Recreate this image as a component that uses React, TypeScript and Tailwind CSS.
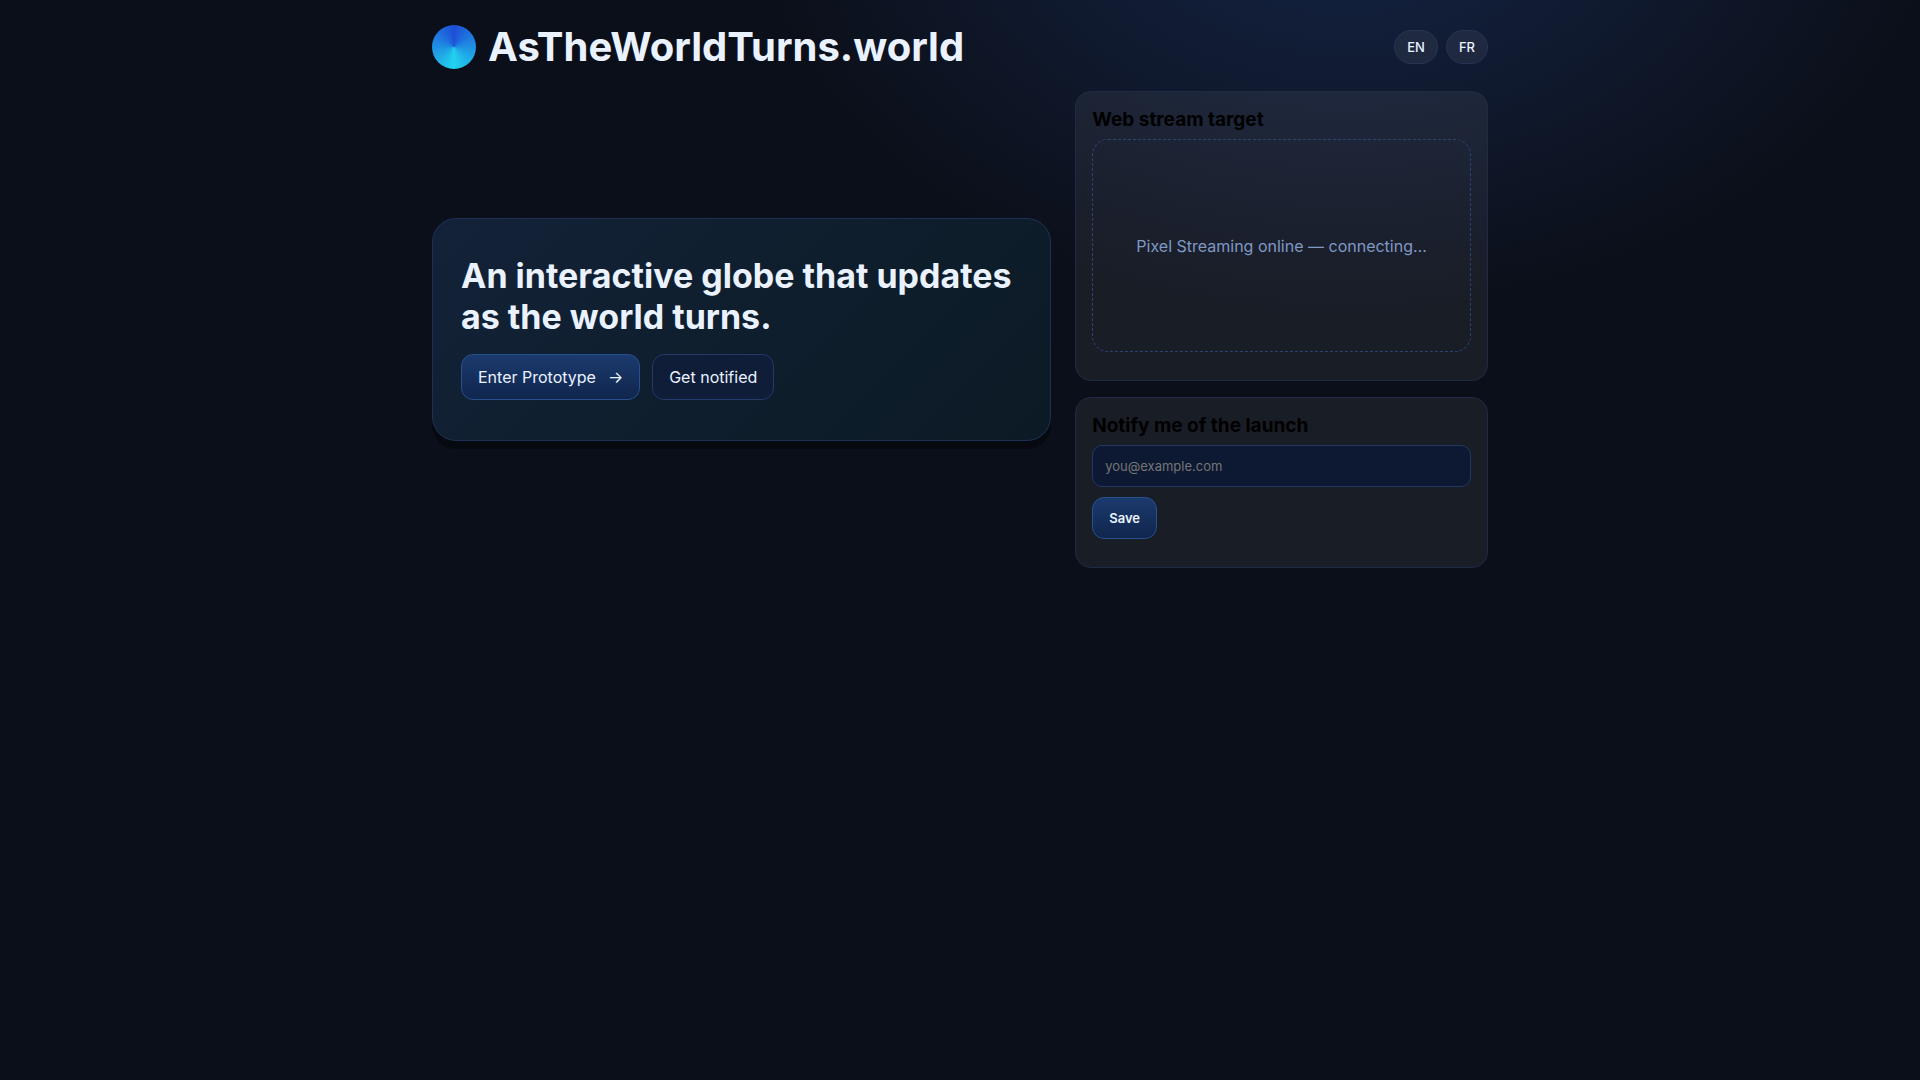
import { ReactNode } from "react";

function Card({ title, children }: { title: string; children: ReactNode }) {
  return (
    <section className="rounded-2xl border border-[#1f2a44] bg-white/[0.06] px-4 pt-4 pb-7">
      <h3 className="mb-2 text-[19px] leading-[23px] font-bold text-black">{title}</h3>
      {children}
    </section>
  );
}

export default function App() {
  return (
    <div className="min-h-screen bg-[#0b0f19] bg-[radial-gradient(1000px_700px_at_70%_-10%,#152546_0%,transparent_60%)] font-['Inter',sans-serif] text-base text-[#eaf2ff]">
      <div className="mx-auto max-w-[1100px] px-[22px] pb-6">
        {/* Header */}
        <header className="flex items-center justify-between pt-6 pb-[21px]">
          <div className="flex items-center gap-3">
            <div className="size-11 rounded-full bg-[conic-gradient(#1d4ed8,#22d3ee,#1d4ed8)]" />
            <h1 className="text-[40px] leading-[46px] font-bold">AsTheWorldTurns.world</h1>
          </div>
          <nav className="flex gap-2">
            <button className="rounded-full border border-[#273352] bg-white/[0.06] px-3 py-2 text-[13px] leading-4 font-medium">
              EN
            </button>
            <button className="rounded-full border border-[#273352] bg-white/[0.06] px-3 py-2 text-[13px] leading-4 font-medium">
              FR
            </button>
          </nav>
        </header>

        <main className="grid grid-cols-1 items-center gap-6 lg:grid-cols-[3fr_2fr]">
          {/* Hero */}
          <section className="rounded-3xl border border-[#1f3055] bg-[linear-gradient(135deg,#132238,#0e1e2c_55%,#0c1a25)] px-7 pt-9 pb-10 shadow-[0_8px_0_rgba(0,0,0,0.35)]">
            <h2 className="mb-[17px] text-[34px] leading-[41px] font-bold">
              An interactive globe that updates as the world turns.
            </h2>
            <div className="flex flex-wrap gap-3">
              <a
                href="#prototype"
                className="flex items-center gap-3 rounded-xl border border-[#27508f] bg-linear-to-b from-[#1b3a6e] to-[#10264d] px-4 py-2.5"
              >
                Enter Prototype <span>→</span>
              </a>
              <a href="#notify" className="rounded-xl border border-[#25396a] bg-[#0f1d38] px-4 py-2.5">
                Get notified
              </a>
            </div>
          </section>

          {/* Side column */}
          <aside className="flex flex-col gap-4">
            <Card title="Web stream target">
              <div className="flex aspect-video items-center justify-center rounded-2xl border border-dashed border-[#2a4374] text-[#8099c4]">
                Pixel Streaming online — connecting…
              </div>
            </Card>
            <Card title="Notify me of the launch">
              <form id="notify" onSubmit={(e) => e.preventDefault()}>
                <input
                  type="email"
                  aria-label="Email"
                  placeholder="you@example.com"
                  className="block w-full rounded-[10px] border border-[#223765] bg-[#0d1933] p-3 text-[13px] leading-4 placeholder:text-[#757575]"
                />
                <button className="mt-2.5 rounded-xl border border-[#27508f] bg-linear-to-b from-[#1b3a6e] to-[#10264d] px-4 py-3 text-[13px] leading-4 font-semibold">
                  Save
                </button>
              </form>
            </Card>
          </aside>
        </main>
      </div>
    </div>
  );
}
